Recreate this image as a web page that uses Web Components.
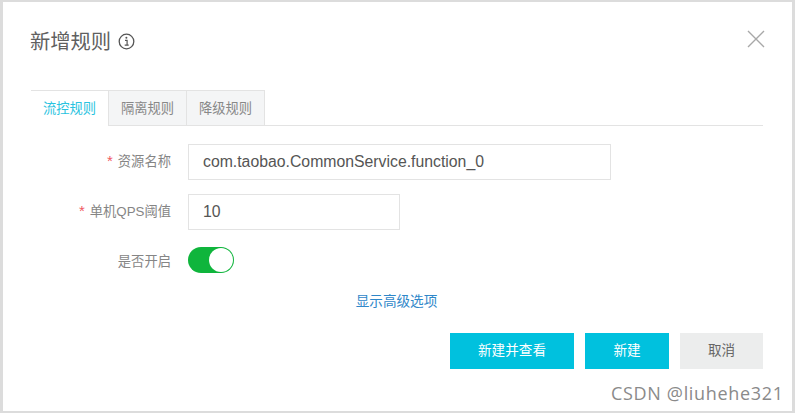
<!DOCTYPE html>
<html>
<head>
<meta charset="utf-8">
<title>新增规则</title>
<style>
  html, body { margin: 0; height: 100%; background: #dcdcdc; overflow: hidden; }
  body { font-family: "Liberation Sans", "Noto Sans CJK SC", sans-serif; }
</style>
</head>
<body>
<rule-dialog heading="新增规则">
  <rule-tabs></rule-tabs>
  <form-row label="资源名称" required><text-box value="com.taobao.CommonService.function_0" width="423"></text-box></form-row>
  <form-row label="单机QPS阈值" required><text-box value="10" width="212"></text-box></form-row>
  <form-row label="是否开启"><toggle-switch></toggle-switch></form-row>
  <a slot="link">显示高级选项</a>
  <flat-button slot="actions" kind="primary" width="124">新建并查看</flat-button>
  <flat-button slot="actions" kind="primary" width="84">新建</flat-button>
  <flat-button slot="actions" width="83">取消</flat-button>
</rule-dialog>

<script>
class RuleDialog extends HTMLElement {
  constructor() {
    super();
    this.attachShadow({ mode: 'open' });
  }

  connectedCallback() {
    this.shadowRoot.innerHTML = `
      <style>
        :host { display: block; position: relative; box-sizing: border-box; width: 789px; height: 409px; margin: 2px 0 0 3px; padding: 0 29px 0 28px; background: #fff; color: #666; }
        .head { display: flex; align-items: center; height: 88px; padding-bottom: 9px; box-sizing: border-box; gap: 7px; margin-left: -1px; }
        h1 { margin: 0; font-size: 20.3px; font-weight: 400; color: #5f5f5f; line-height: 28px; }
        .close { position: absolute; left: 744px; top: 28px; width: 18px; height: 18px; }
        .link { text-align: center; height: 32px; box-sizing: border-box; margin: -1px 0 0 -1px; font-size: 13.6px; line-height: 18px; color: #2f87c9; }
        .actions { display: flex; justify-content: flex-end; gap: 11px; margin-top: 8px; }
        .mark { position: absolute; left: 608px; top: 380px; font: 18px/22px "Open Sans", sans-serif; color: #8a8a8a; letter-spacing: 0.67px; white-space: nowrap; }
        .info { flex: none; }
      </style>
      <div class="head">
        <h1>${this.getAttribute('heading')}</h1>
        <svg class="info" width="17" height="17" viewBox="0 0 17 17" fill="none" stroke="#555">
          <circle cx="8.5" cy="8.5" r="7.3" stroke-width="1.3"/>
          <path d="M7 7.4h2.1v4.6M6.7 12.1h4" stroke-width="1.2"/>
          <circle cx="8.4" cy="4.8" r="1" fill="#555" stroke="none"/>
        </svg>
      </div>
      <svg class="close" viewBox="0 0 18 18" fill="none" stroke="#a8a8a8" stroke-width="1.4">
        <path d="M1 1l16 16M17 1L1 17"/>
      </svg>
      <slot></slot>
      <div class="link"><slot name="link"></slot></div>
      <div class="actions"><slot name="actions"></slot></div>
      <div class="mark">CSDN @liuhehe321</div>
    `;
  }
}

class RuleTabs extends HTMLElement {
  constructor() {
    super();
    this.attachShadow({ mode: 'open' });
  }

  connectedCallback() {
    const tabs = ['流控规则', '隔离规则', '降级规则'];
    this.shadowRoot.innerHTML = `
      <style>
        :host { display: flex; height: 35px; margin-bottom: 18px; border-bottom: 1px solid #e3e3e3; box-sizing: content-box; }
        .tab { box-sizing: border-box; width: 78px; height: 35px; border: 1px solid #e3e3e3; border-bottom: 0; border-left: 0; background: #f4f5f6; color: #888; font-size: 13.3px; line-height: 35px; text-align: center; }
        .tab:first-child { width: 78px; border-left: 1px solid #e3e3e3; }
        .tab.active { height: 36px; background: #fff; color: #29c3e0; }
      </style>
      ${tabs.map((t, i) => `<div class="tab${i === 0 ? ' active' : ''}">${t}</div>`).join('')}
    `;
  }
}

class FormRow extends HTMLElement {
  constructor() {
    super();
    this.attachShadow({ mode: 'open' });
  }

  connectedCallback() {
    const star = this.hasAttribute('required') ? '<i>*</i>' : '';
    this.shadowRoot.innerHTML = `
      <style>
        :host { display: flex; align-items: center; min-height: 36px; margin-bottom: 14px; }
        label { box-sizing: border-box; width: 140px; margin: -3px 17px 0 0; text-align: right; font-size: 13.3px; color: #858585; white-space: nowrap; flex: none; }
        i { font-style: normal; font-size: 15px; line-height: 0; color: #f0595f; margin-right: 5px; }
      </style>
      <label>${star}${this.getAttribute('label')}</label>
      <slot></slot>
    `;
  }
}

class TextBox extends HTMLElement {
  constructor() {
    super();
    this.attachShadow({ mode: 'open' });
  }

  connectedCallback() {
    this.shadowRoot.innerHTML = `
      <style>
        :host { display: block; box-sizing: border-box; width: ${this.getAttribute('width')}px; height: 36px; border: 1px solid #e3e3e3; padding-left: 14px; font-size: 15.8px; line-height: 33px; color: #555; }
      </style>
      ${this.getAttribute('value')}
    `;
  }
}

class ToggleSwitch extends HTMLElement {
  constructor() {
    super();
    this.attachShadow({ mode: 'open' });
  }

  connectedCallback() {
    this.shadowRoot.innerHTML = `
      <style>
        :host { display: flex; justify-content: flex-end; box-sizing: border-box; width: 46px; height: 26px; margin-top: -4px; padding: 1px; border-radius: 13px; background: #0fb53c; }
        b { display: block; width: 24px; height: 24px; border-radius: 50%; background: #fff; }
      </style>
      <b></b>
    `;
  }
}

class FlatButton extends HTMLElement {
  constructor() {
    super();
    this.attachShadow({ mode: 'open' });
  }

  connectedCallback() {
    const primary = this.getAttribute('kind') === 'primary';
    this.shadowRoot.innerHTML = `
      <style>
        :host { display: block; box-sizing: border-box; width: ${this.getAttribute('width')}px; height: 36px; font-size: 13.6px; line-height: 36px; text-align: center; background: ${primary ? '#00c1de' : '#eceded'}; color: ${primary ? '#fff' : '#666'}; }
      </style>
      <slot></slot>
    `;
  }
}

customElements.define('rule-dialog', RuleDialog);
customElements.define('rule-tabs', RuleTabs);
customElements.define('form-row', FormRow);
customElements.define('text-box', TextBox);
customElements.define('toggle-switch', ToggleSwitch);
customElements.define('flat-button', FlatButton);
</script>
</body>
</html>
